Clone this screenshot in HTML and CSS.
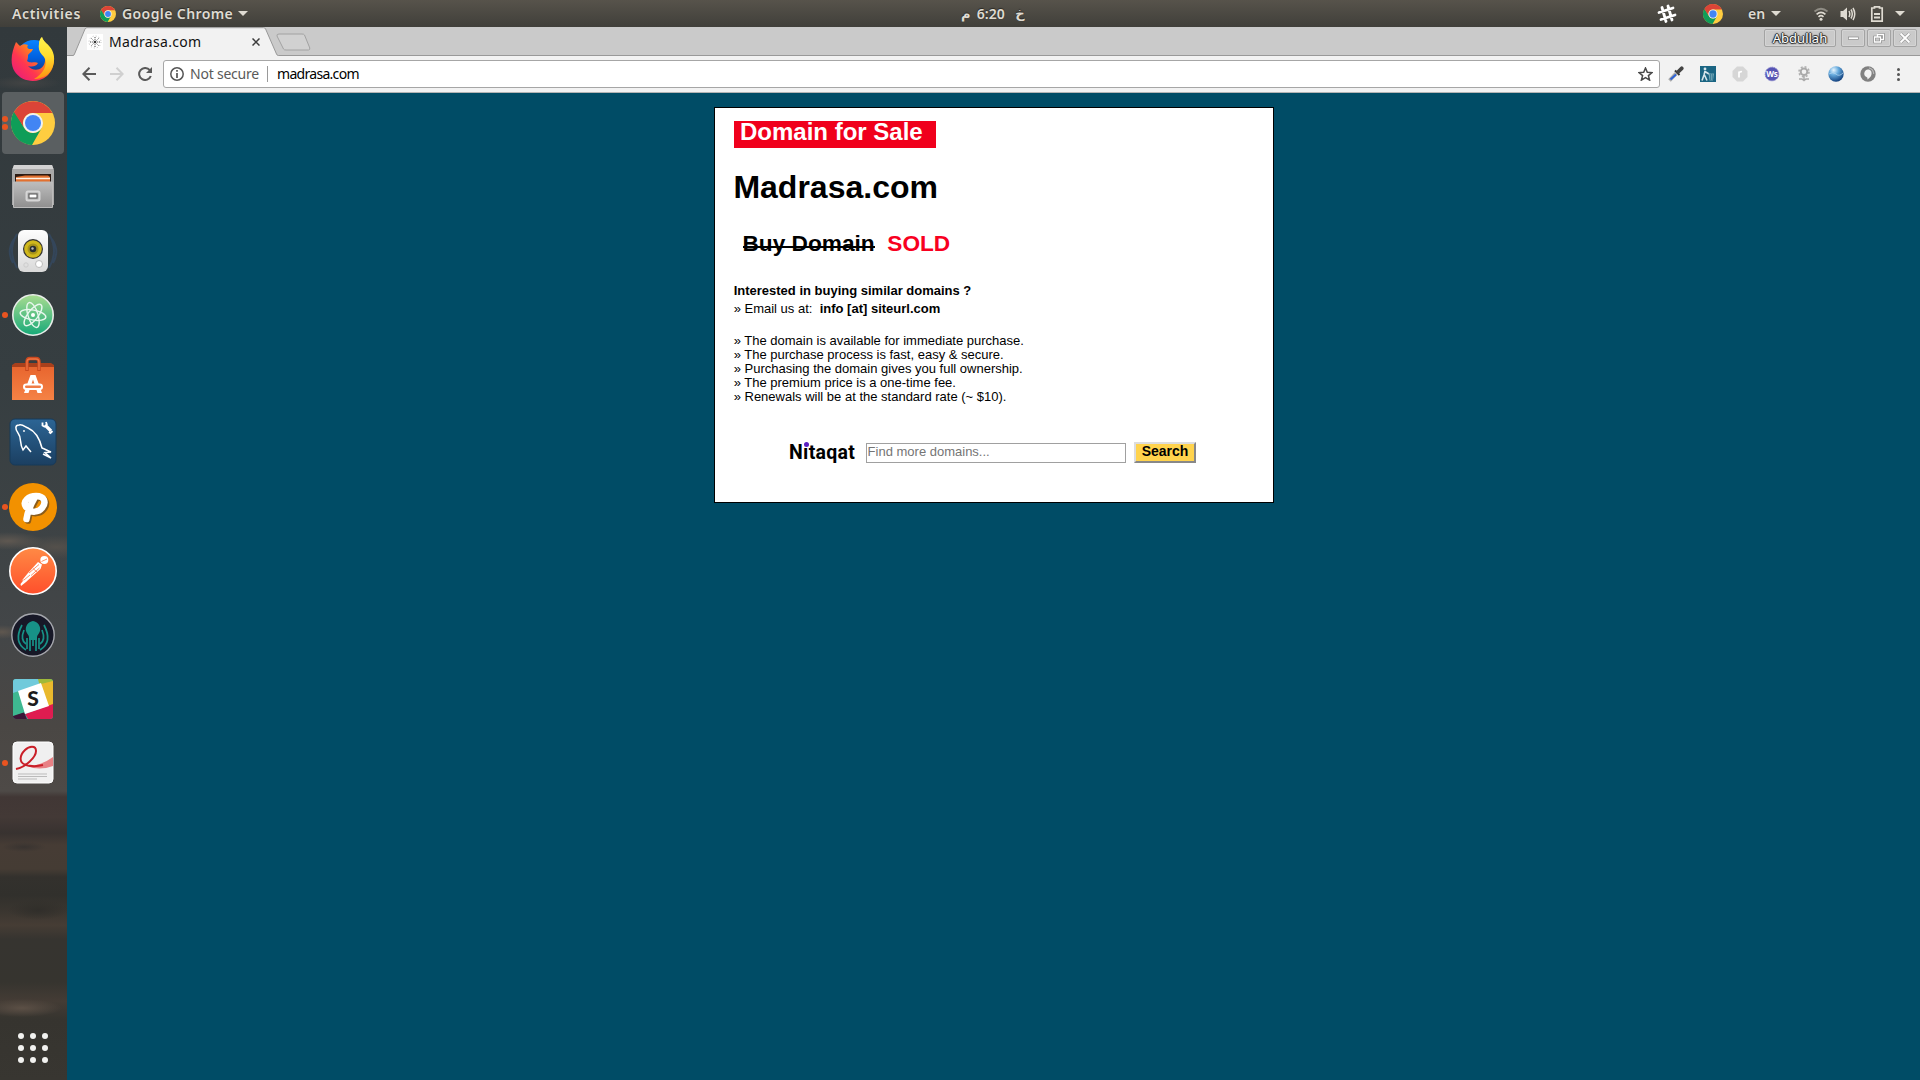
FILE: index.html
```html
<!DOCTYPE html>
<html lang="en">
<head>
<meta charset="utf-8">
<title>Madrasa.com</title>
<link rel="stylesheet" href="styles.css">
</head>
<body>
<svg class="defs" width="0" height="0">
  <defs>
    <linearGradient id="gFox" x1="0" y1="1" x2="1" y2="0"><stop offset="0" stop-color="#e31587"/><stop offset=".35" stop-color="#ff3750"/><stop offset=".65" stop-color="#ff980e"/><stop offset="1" stop-color="#fff44f"/></linearGradient>
    <linearGradient id="gFlame" x1="0" y1="0" x2="0" y2="1"><stop offset="0" stop-color="#fff44f"/><stop offset=".45" stop-color="#ffde2e"/><stop offset="1" stop-color="#ff9010"/></linearGradient>
    <linearGradient id="gBlue" x1="0" y1="0" x2="0" y2="1"><stop offset="0" stop-color="#0a84ff"/><stop offset=".5" stop-color="#0060df"/><stop offset="1" stop-color="#20306f"/></linearGradient>
    <linearGradient id="gMetal" x1="0" y1="0" x2="0" y2="1"><stop offset="0" stop-color="#bdbdbd"/><stop offset="1" stop-color="#8f8f8f"/></linearGradient>
    <linearGradient id="gWhite" x1="0" y1="0" x2="0" y2="1"><stop offset="0" stop-color="#fdfdfd"/><stop offset="1" stop-color="#d9d9d9"/></linearGradient>
    <linearGradient id="gAtom" x1="0" y1="0" x2="0" y2="1"><stop offset="0" stop-color="#a8dc90"/><stop offset="1" stop-color="#17a978"/></linearGradient>
    <linearGradient id="gBag" x1="0" y1="0" x2="0" y2="1"><stop offset="0" stop-color="#e8662f"/><stop offset="1" stop-color="#f58245"/></linearGradient>
    <linearGradient id="gSql" x1="0" y1="0" x2="0" y2="1"><stop offset="0" stop-color="#2c6595"/><stop offset="1" stop-color="#1b3f61"/></linearGradient>
    <linearGradient id="gPost" x1="0" y1="0" x2="0" y2="1"><stop offset="0" stop-color="#ff8a45"/><stop offset="1" stop-color="#ff4f2b"/></linearGradient>
    <radialGradient id="gGlobe" cx=".35" cy=".25" r=".8"><stop offset="0" stop-color="#e8f6ff"/><stop offset=".4" stop-color="#64a9dc"/><stop offset="1" stop-color="#0d3a78"/></radialGradient>
    <symbol id="chrome" viewBox="0 0 44 44">
      <circle cx="22" cy="22" r="22" fill="#ffcd40"/>
      <path d="M2.900 11A22 22 0 0 0 21 44L30.700 27A10 10 0 0 1 13.300 27L4 11Z" fill="#0f9d58"/>
      <path d="M2.900 11A22 22 0 0 1 41.400 12H22A10 10 0 0 0 13.300 27Z" fill="#db4437"/>
      <circle cx="22" cy="22" r="10" fill="#f1f1f1"/><circle cx="22" cy="22" r="8" fill="#4285f4"/>
    </symbol>
  </defs>
</svg>

<header class="topbar">
  <span class="activities">Activities</span>
  <svg class="app-icon" width="16" height="16"><use href="#chrome"/></svg>
  <span class="app-name">Google Chrome</span>
  <span class="caret"></span>
  <div class="clock"><span class="ar">م</span><span class="time">6:20</span><span class="ar day">خ</span></div>
  <div class="tray">
    <svg class="t-slack" width="20" height="20" viewBox="0 0 20 20"><path d="M5 3.500L9 17.500M11 2L15 16M2 8.500L16 4M4 15.500L18 11" stroke="#fff" stroke-width="2.800" stroke-linecap="round"/></svg>
    <svg class="t-chrome" width="20" height="20"><use href="#chrome"/></svg>
    <span class="t-lang">en</span>
    <span class="caret"></span>
    <svg class="t-wifi" width="16" height="16" viewBox="0 0 16 16" fill="none" stroke="#dfdbd2" stroke-width="1.700"><path d="M1.500 5.500Q8 0 14.500 5.500" stroke="#8f8c84"/><path d="M3.600 8.300Q8 4.500 12.400 8.300"/><path d="M5.500 10.800Q8 8.600 10.500 10.800"/><circle cx="8" cy="13.300" r="1.500" fill="#dfdbd2" stroke="none"/></svg>
    <svg class="t-vol" width="16" height="16" viewBox="0 0 16 16" fill="none" stroke="#dfdbd2" stroke-width="1.500"><path d="M.5 5H3L7 1.500V14.500L3 11H.5Z" fill="#dfdbd2" stroke="none"/><path d="M9 5Q10.600 8 9 11M11 3.500Q13.600 8 11 12.500M13 2Q16.500 8 13 14"/></svg>
    <svg class="t-bat" width="14" height="16" viewBox="0 0 14 16"><path d="M4.500 2V.8H9.500V2H12.200V15.200H1.800V2Z" fill="none" stroke="#dfdbd2" stroke-width="1.700"/><path d="M4 8H10M4 11.500H10" stroke="#dfdbd2" stroke-width="2"/></svg>
    <span class="caret last"></span>
  </div>
</header>

<main class="desktop">
<nav class="dock">
  <div class="item"><svg width="44" height="46" viewBox="0 0 44 46">
    <circle cx="23" cy="22" r="18" fill="url(#gBlue)"/>
    <path d="M5 6C7 8 8 9 9 10C12 8 14 8 17 9C16 11 16 12 18 13H22C21 16 18 17 17 19C17 21 17 23 16 25C20 28 24 25 27 27C25 31 20 31 17 30C22 36 33 35 34 25C35 19 28 16 28 9C28 5 29 3 31 1C32 5 36 8 39 12C46 22 43 34 36 40C26 48 11 46 4 36C-2 27 1 15 5 6Z" fill="url(#gFox)"/>
    <path d="M31 1C32 6 38 8 41 14C45 22 43 31 38 37C34 41 28 43 23 43C34 37 37 27 33 21C29 17 27 14 28 8C28 5 29 3 31 1Z" fill="url(#gFlame)"/>
  </svg></div>
  <div class="item active two"><svg width="44" height="44"><use href="#chrome"/></svg></div>
  <div class="item"><svg class="raise" width="44" height="46" viewBox="0 0 44 46">
    <path d="M3 2H41L43 7V42H1V7Z" fill="#a9a9a9"/><path d="M3 2H41L42.500 6H1.500Z" fill="#d2d2d2"/><path d="M4 11H40V20H4Z" fill="#2b1a12"/><path d="M5 14L14 12.500H37L39 14V19H5Z" fill="#e2702f"/><path d="M5 15.500H39" stroke="#fff3e5" stroke-width="1.500"/><path d="M2.500 19H41.500V44.500H2.500Z" fill="url(#gMetal)" stroke="#bbb"/><rect x="15.500" y="28.500" width="13" height="9" rx="1.500" fill="#aaa" stroke="#d6d6d6" stroke-width="2"/><rect x="18" y="31" width="8" height="4" fill="#fff" stroke="#555"/>
  </svg></div>
  <div class="item"><svg width="50" height="46" viewBox="0 0 50 46" fill="none">
    <path d="M9 6Q-1 23 9 40M41 6Q51 23 41 40M6 11Q-2 23 5 35M44 11Q52 23 45 35" stroke="#34465a" stroke-width="2"/>
    <rect x="10" y="2" width="30" height="42" rx="6" fill="url(#gWhite)"/><circle cx="25" cy="21" r="10" fill="#333"/><circle cx="25" cy="21" r="8.800" fill="#d0b81c"/><circle cx="25" cy="21" r="5.500" fill="#a8941a"/><circle cx="25" cy="21" r="3.300" fill="#282d30"/><circle cx="24.500" cy="20.500" r="1.200" fill="#bbb"/><circle cx="31" cy="36" r="3.500" fill="#fff" stroke="#bbb"/><circle cx="18" cy="37" r="2.200" stroke="#ccc"/>
  </svg></div>
  <div class="item one"><svg width="42" height="42" viewBox="0 0 42 42" fill="none">
    <circle cx="21" cy="21" r="20.200" fill="url(#gAtom)" stroke="#e8ece9" stroke-width="1.600"/><g stroke="#e9f7ee" stroke-width="1.400"><ellipse cx="21" cy="21" rx="13" ry="5" transform="rotate(10 21 21)"/><ellipse cx="21" cy="21" rx="13" ry="5" transform="rotate(72 21 21)"/><ellipse cx="21" cy="21" rx="13" ry="5" transform="rotate(128 21 21)"/></g><circle cx="21" cy="21" r="2" fill="#fff"/>
  </svg></div>
  <div class="item"><svg class="raise" width="42" height="46" viewBox="0 0 42 46" fill="none">
    <path d="M0 10L3 8H39L42 10V13H0Z" fill="#a8401c"/><path d="M0 12H42V45H0Z" fill="url(#gBag)"/><path d="M15 16V7Q15 3.500 18 3.500H24Q27 3.500 27 7V16" stroke="#c9481e" stroke-width="3.500"/><path d="M15 15V7Q15 4 18 4H24Q27 4 27 7V15" stroke="#ee7444" stroke-width="1.300"/>
    <path d="M18.500 20H23.500L30 38H25.500L21 24.500L16.500 38H12Z" fill="#fff"/><rect x="12" y="29.500" width="18" height="4.600" rx="2.300" fill="#f07c46" stroke="#fff" stroke-width="2"/>
  </svg></div>
  <div class="item"><svg class="raise" width="48" height="48" viewBox="0 0 48 48" fill="none">
    <rect x="1" y="1" width="46" height="46" rx="5" fill="url(#gSql)" stroke="#173a59"/>
    <path d="M22 34L17 28L14 32C10 25 13 20 9 15C6 11 6 7 10 7C14 6 16 9 19 10C28 14 31 22 33 30C36 31 39 33 42 34L36 34.500L42 40L34 36" stroke="#fff" stroke-width="1.500"/><circle cx="15" cy="13" r=".9" fill="#fff"/>
    <path d="M36 7L42 13" stroke="#fff" stroke-width="3.200"/><path d="M33.500 4.500V7.500L36 9M40 14L41.500 15L43.500 13" stroke="#fff" stroke-width="1.800"/><path d="M37 4L38 7" stroke="#fff" stroke-width="1.800"/>
  </svg></div>
  <div class="item one"><svg width="48" height="48" viewBox="0 0 48 48" fill="none">
    <circle cx="24" cy="24" r="24" fill="#f29100"/><path d="M17 24C13 18 20 13 27 13C35 13 38 19 33 25C29 30 22 29 21 27M25 16C21 23 18 32 17.500 36" transform="translate(1.500 1.500)" stroke="#8a5c1a" stroke-width="6.500" stroke-linecap="round"/><path d="M17 24C13 18 20 13 27 13C35 13 38 19 33 25C29 30 22 29 21 27M25 16C21 23 18 32 17.500 36" stroke="#fff" stroke-width="6.500" stroke-linecap="round" stroke-linejoin="round"/>
  </svg></div>
  <div class="item"><svg width="48" height="48" viewBox="0 0 48 48">
    <circle cx="24" cy="24" r="23.200" fill="url(#gPost)" stroke="#fff" stroke-width="1.600"/><circle cx="35.300" cy="13" r="4" fill="#fff"/><path d="M29 15L33 17.500L31.500 22L23 29.500L17 35L12 39L11.500 37L15.500 32L12.500 34L19 26Z" fill="#fff"/><path d="M32.500 14.500L38 12M20 26L30 17.500M22 28.500L30.500 21M24 21.500L28 25M15 33L21 28" stroke="#ff7443" stroke-width=".8" fill="none"/>
  </svg></div>
  <div class="item"><svg width="44" height="44" viewBox="0 0 44 44" fill="none">
    <circle cx="22" cy="22" r="21.200" fill="#171827" stroke="#a5a7ad" stroke-width="1.400"/><path d="M22 8C27 9 30 13 29 18C28 21 26 22 26 24V27H18V24C18 22 16 21 15 18C14 13 17 9 22 8Z" fill="#179287"/><g stroke="#179287" stroke-width="1.700"><path d="M19 26V38M25 26V38M22 26V33M16 25V36M28 25V36"/><path d="M11 12Q2 29 15 37M33 12Q42 29 29 37M13 17Q9 27 15 31M31 17Q35 27 29 31"/></g>
  </svg></div>
  <div class="item"><svg width="40" height="40" viewBox="0 0 40 40">
    <rect width="40" height="40" rx="3" fill="#3bb9a0"/><path d="M3 0H28L32 10L5 16L0 14V3Q0 0 3 0Z" fill="#70cadb"/><path d="M25 0H37Q40 0 40 3V8L28 12Z" fill="#9fb93a"/><path d="M28 5L40 2V27L33 29Z" fill="#e9b92d"/><path d="M40 25V37Q40 40 37 40H15L12 35Z" fill="#df1c50"/><path d="M0 36L11 33L14 40H3Q0 40 0 37Z" fill="#3c1637"/><path d="M0 14L6 12L12 33L0 37Z" fill="#3eb890"/><path d="M5 12L28 4L36 27L12 35Z" fill="#fff"/>
    <text x="20" y="27" text-anchor="middle" class="slack-s">S</text>
  </svg></div>
  <div class="item one"><svg width="42" height="44" viewBox="0 0 42 44" fill="none">
    <rect x="1" y="1" width="40" height="41" rx="4" fill="#f0f0f0" stroke="#fff"/><path d="M15 25Q29 25 41 16V25Q27 30 15 25Z" fill="#e88084"/><path d="M4 28C14 26 24 16 24 10C24 4 17 5 13 9C7 15 7 22 14 24C21 26 27 25 31 24" stroke="#c91f28" stroke-width="2"/><path d="M6 33H35M6 35.500H35M6 38H25" stroke="#bbb" stroke-width="1"/>
  </svg></div>
  <div class="apps"><i></i><i></i><i></i><i></i><i></i><i></i><i></i><i></i><i></i></div>
</nav>

<section class="window">
  <div class="tabstrip">
    <div class="tab">
      <svg class="tab-shape" width="206" height="29" viewBox="0 0 206 29"><path d="M0 29V28.500Q1 28.500 1.500 27L12 2Q12.700 .7 14 .7H190.500Q192 .7 192.600 2L203.500 27Q204 28.500 205.500 28.500V29Z" fill="#f2f2f2"/><path d="M0 28.500Q1 28.500 1.500 27L12 2Q12.700 .7 14 .7H190.500Q192 .7 192.600 2L203.500 27Q204 28.500 205.500 28.500" fill="none" stroke="#999"/></svg>
      <svg class="favicon" width="16" height="16" viewBox="0 0 16 16"><rect width="16" height="16" fill="#fff"/><g fill="none"><circle cx="8" cy="8" r="1" fill="#000"/><path d="M8 3V13M3 8H13M4.500 4.500L11.500 11.500M11.500 4.500L4.500 11.500" stroke="#333" stroke-dasharray="1 .8" stroke-width=".9"/><circle cx="8" cy="8" r="6" stroke="#bbb" stroke-dasharray="1 2.140"/></g></svg>
      <span class="tab-title">Madrasa.com</span>
      <svg class="tab-close" width="8" height="8" viewBox="0 0 8 8"><path d="M.5 .5L7.500 7.500M7.500 .5L.5 7.500" stroke="#3c3c3c" stroke-width="1.500"/></svg>
    </div>
    <svg class="newtab" width="35" height="18" viewBox="0 0 35 18"><path d="M3 1H26Q28 1 28.500 2L33.800 15Q34 17 32.500 17H10Q8 17 7.500 16L1 3Q.5 1 3 1Z" fill="#d1d1d1" stroke="#a2a2a2"/></svg>
    <div class="wm"><span class="user">Abdullah</span>
      <span class="wbtn"><svg width="14" height="14" viewBox="0 0 14 14"><rect x="2.500" y="6" width="10" height="2.500" fill="#fff" stroke="#8a8a8a" stroke-width=".7"/></svg></span>
      <span class="wbtn"><svg width="14" height="14" viewBox="0 0 14 14" fill="none"><path d="M5.500 3.500H11.500V8.500H9.500M2.500 6H8.500V11H2.500Z" stroke="#888" stroke-width="2.600"/><path d="M5.500 6V3.500H11.500V8.500H8.500M2.500 6H8.500V11H2.500Z" stroke="#fff" stroke-width="1.300"/></svg></span>
      <span class="wbtn"><svg width="14" height="14" viewBox="0 0 14 14"><path d="M2.500 2.500L11.500 11.500M11.500 2.500L2.500 11.500" stroke="#888" stroke-width="3"/><path d="M2.500 2.500L11.500 11.500M11.500 2.500L2.500 11.500" stroke="#fff" stroke-width="1.900"/></svg></span>
    </div>
  </div>
  <div class="toolbar">
    <svg class="back" width="14" height="14" viewBox="0 0 14 14" fill="none" stroke="#5a5a5a" stroke-width="2"><path d="M14 7H1.500M7.500 .8L1.300 7L7.500 13.200"/></svg>
    <svg class="fwd" width="14" height="14" viewBox="0 0 14 14" fill="none" stroke="#d0d0d0" stroke-width="2"><path d="M0 7H12.500M6.500 .8L12.700 7L6.500 13.200"/></svg>
    <svg class="reload" width="14" height="14" viewBox="0 0 14 14"><path d="M11.800 3.200A6 6 0 1 0 12.800 9" fill="none" stroke="#5a5a5a" stroke-width="2"/><path d="M14 0V6H8Z" fill="#5a5a5a"/></svg>
    <div class="omnibox">
      <svg width="14" height="14" viewBox="0 0 14 14"><circle cx="7" cy="7" r="6.200" fill="none" stroke="#555" stroke-width="1.500"/><path d="M7 6V11M7 3V4.700" stroke="#555" stroke-width="1.700"/></svg>
      <span class="insecure">Not secure</span><span class="sep"></span><span class="url">madrasa.com</span>
      <svg class="star" width="15" height="14" viewBox="0 0 15 14"><path d="M7.500 1L9.300 5.300L14 5.600L10.400 8.600L11.600 13.100L7.500 10.600L3.400 13.100L4.600 8.600L1 5.600L5.700 5.300Z" fill="none" stroke="#4a4a4a" stroke-width="1.500"/></svg>
    </div>
    <div class="ext">
      <svg width="16" height="16" viewBox="0 0 16 16"><path d="M1.500 14.500L8 7.500" stroke="#aaa" stroke-width="3.500"/><path d="M2.500 13.500L8 8.500" stroke="#2d62d5" stroke-width="2"/><path d="M7 4.500L11.500 9" stroke="#333" stroke-width="2"/><path d="M10 6L13.700 2.300" stroke="#444" stroke-width="3.800" stroke-linecap="round"/></svg>
      <svg width="16" height="16" viewBox="0 0 16 16"><rect width="16" height="16" fill="#1b6583"/><circle cx="5" cy="3" r="1.400" fill="#d5e5eb"/><path d="M5 5L4 9L2 14.500M4.500 9L7 14.500M5 5.500L9 8" stroke="#d5e5eb" stroke-width="1.600" fill="none"/><path d="M8.500 7.500H14L13 14.500H9.500Z" fill="#77a9b9"/><path d="M10.500 8V14M12.300 8V14" stroke="#1b6583" stroke-width=".6"/></svg>
      <svg width="16" height="16" viewBox="0 0 16 16"><path d="M5 .5H11L15.500 5V11L11 15.500H5L.5 11V5Z" fill="#d6d6d6"/><path d="M7 11.500V5.500M7 7Q8 5.300 10 5.800" stroke="#fff" stroke-width="1.700" fill="none"/></svg>
      <svg width="16" height="16" viewBox="0 0 16 16"><circle cx="8" cy="8" r="6.800" fill="#5654b4" stroke="#7876c4" stroke-dasharray="1.200 .8"/><text x="8" y="10.500" text-anchor="middle" class="ws">Ws</text></svg>
      <svg width="16" height="16" viewBox="0 0 16 16" fill="none"><circle cx="8" cy="5.800" r="3.300" stroke="#aaa" stroke-width="2"/><circle cx="8" cy="5.800" r="5" stroke="#b0b0b0" stroke-width="1.600" stroke-dasharray="2 1.920"/><path d="M8 10V14M3 13H6L8 14.500L10 13H13" stroke="#aaa" stroke-width="1.500"/></svg>
      <svg width="16" height="16" viewBox="0 0 16 16"><circle cx="8" cy="8" r="7.700" fill="url(#gGlobe)"/><path d="M1 8Q5 5 8 8T15 7" stroke="#b9dcf4" fill="none" opacity=".7"/></svg>
      <svg width="16" height="16" viewBox="0 0 16 16" fill="none"><circle cx="8" cy="8" r="7.700" fill="#808080"/><path d="M8 3.500C11 3.500 12 6 11.500 8.500C11 11 9 12.500 7 13.500C8 12 7.500 11.500 6.500 11C4.500 10 4 8.500 4.300 7C4.800 4.800 6 3.500 8 3.500Z" fill="#f2f2f2"/><path d="M9 1.800Q13.500 3 13.700 8" stroke="#b5b5b5" stroke-width="1.200"/></svg>
    </div>
    <div class="menu"><i></i><i></i><i></i></div>
  </div>
  <div class="page">
    <div class="card">
      <div class="sale">Domain for Sale</div>
      <h1>Madrasa.com</h1>
      <div class="buy"><s>Buy Domain</s><span class="sold">SOLD</span></div>
      <p class="lead">Interested in buying similar domains ?</p>
      <p class="mail">» Email us at: &nbsp;<b>info [at] siteurl.com</b></p>
      <p class="list">» The domain is available for immediate purchase.<br>» The purchase process is fast, easy &amp; secure.<br>» Purchasing the domain gives you full ownership.<br>» The premium price is a one-time fee.<br>» Renewals will be at the standard rate (~ $10).</p>
      <form class="search"><span class="brand">N<span class="dot-i">ı</span>taqat</span><input type="text" placeholder="Find more domains..."><button type="button">Search</button></form>
    </div>
  </div>
</section>
</main>
</body>
</html>
```
FILE: styles.css
```css
* { box-sizing: border-box; }
body { margin: 0; width: 1920px; height: 1080px; overflow: hidden; font-family: "Noto Sans", sans-serif; background: #004c66; }
svg { display: block; flex: none; }
.defs { position: absolute; }
span { white-space: nowrap; }

.topbar { height: 27px; background: linear-gradient(#57534b, #403f3a); color: #dfdbd2; display: flex; align-items: center; font-weight: 600; font-size: 14px; text-shadow: 0 -1px 1px #2a2926; }
.activities { width: 88px; padding-left: 12px; letter-spacing: .65px; }
.app-icon { margin-left: 12px; }
.app-name { width: 110px; margin-left: 6px; letter-spacing: .4px; }
.caret { width: 10px; height: 5px; margin-left: 6px; background: #dfdbd2; clip-path: polygon(0 0, 100% 0, 50% 100%); }
.clock { margin-left: 713px; width: 70px; display: flex; align-items: center; }
.ar { font-family: "DejaVu Sans", sans-serif; font-weight: 700; font-size: 13px; width: 16px; }
.time { width: 39px; padding-bottom: 1px; }
.tray { margin-left: auto; width: 263px; display: flex; align-items: center; }
.t-chrome { margin-left: 26px; }
.t-lang { width: 18px; margin-left: 25px; }
.tray .caret { margin-left: 5px; }
.t-wifi { margin-left: 32px; }
.t-vol { margin-left: 11px; }
.t-bat { margin-left: 14px; }
.tray .caret.last { margin-left: 11px; }

.desktop { display: flex; height: 1053px; }
.dock { width: 67px; padding: 1px 3px 0 2px; display: flex; flex-direction: column; gap: 2px; background:
  radial-gradient(ellipse 36px 9px at 8px 514px, #5f5851, transparent),
  radial-gradient(ellipse 40px 12px at 56px 520px, #54504b, transparent),
  radial-gradient(ellipse 20px 7px at 2px 605px, #5f574f, transparent),
  radial-gradient(ellipse 36px 7px at 25px 56px, #434444, transparent),
  radial-gradient(ellipse 22px 5px at 24px 820px, #383330, transparent),
  radial-gradient(ellipse 30px 10px at 38px 883px, #302e2a, transparent),
  radial-gradient(ellipse 40px 9px at 22px 981px, #5c5046, transparent),
  linear-gradient(#32393c 0, #363e41 350px, #3c4244 480px, #434648 600px, #4a4744 700px, #4e4a47 764px, #413735 770px, #433936 790px, #383230 806px, #463c35 818px, #453c34 842px, #33312d 850px, #31302c 868px, #3b3630 885px, #463d35 898px, #363430 912px, #36342f 955px, #443c35 974px, #36342f 992px, #383631 1053px); }
.item { height: 62px; width: 62px; border-radius: 4px; display: flex; align-items: center; justify-content: center; position: relative; flex: none; }
.item.active { background: #5a5f61; }
.raise { margin-bottom: 2px; }
.one::before, .two::before { content: ""; position: absolute; left: 0; top: 28px; width: 6px; height: 6px; border-radius: 50%; background: #e95420; }
.two::before { top: 24px; box-shadow: 0 8px #e95420; }
.slack-s { font: 900 21px Lato, sans-serif; fill: #1d1c1d; }
.apps { margin: auto 0 17px 16px; display: grid; grid-template-columns: repeat(3, 6px); gap: 6px; }
.apps i { width: 6px; height: 6px; border-radius: 50%; background: #f2f2f0; }

.window { flex: 1; display: flex; flex-direction: column; }
.tabstrip { height: 29px; background: #cacaca; border-bottom: 1px solid #999; display: flex; flex: none; }
.tab { width: 206px; height: 29px; margin-left: 6px; position: relative; display: flex; align-items: center; }
.tab-shape { position: absolute; left: 0; top: 0; }
.favicon { margin-left: 14px; position: relative; }
.tab-title { width: 143px; margin-left: 6px; font-size: 14px; letter-spacing: .3px; position: relative; color: #111; }
.tab-close { position: relative; }
.newtab { margin: 6px 0 0 -3px; }
.wm { margin: 2px 3px 0 auto; height: 18px; display: flex; gap: 2px; }
.user, .wbtn { border: 1px solid #a3a3a3; border-radius: 2px; box-shadow: inset 0 0 0 1px #d4d4d4; }
.user { width: 72px; margin-right: 3px; text-align: center; font-size: 13px; line-height: 16px; color: #fff; text-shadow: 1px 0 1px #222, -1px 0 1px #222, 0 1px 1px #222, 0 -1px 1px #222; }
.wbtn { width: 24px; display: flex; align-items: center; justify-content: center; }
.toolbar { height: 37px; background: #f2f2f2; border-bottom: 1px solid #b4b4b4; display: flex; align-items: center; padding-left: 15px; flex: none; }
.fwd, .reload { margin-left: 14px; }
.omnibox { width: 1497px; height: 28px; margin-left: 11px; background: #fff; border: 1px solid #a6a6a6; border-radius: 3px; display: flex; align-items: center; padding: 0 6px; font-size: 14px; color: #000; }
.insecure { width: 77px; margin-left: 6px; padding-bottom: 1px; letter-spacing: -.22px; color: #5a5a5a; }
.sep { width: 1px; height: 16px; background: #9a9a9a; }
.url { margin-left: 9px; padding-bottom: 1px; letter-spacing: -.7px; }
.star { margin-left: auto; }
.ext { display: flex; gap: 16px; margin-left: 8px; }
.menu { margin-left: 21px; display: grid; gap: 2px; }
.menu i { width: 3px; height: 3px; border-radius: 50%; background: #555; }

.page { flex: 1; background: #004c66; padding: 14px 0 0 647px; font-family: "Liberation Sans", Arial, sans-serif; color: #000; }
.card { width: 560px; height: 396px; background: #fff; border: 1px solid #000; padding: 13px 19px; font-size: 13px; }
.sale { width: 202px; height: 27px; background: #f0001c; color: #fff; font: bold 24px/22px "Liberation Sans", sans-serif; padding-left: 6px; }
h1 { margin: 21px 0 0 -.6px; font-size: 32px; line-height: 36px; }
.buy { margin: 25px 0 0 8.5px; display: flex; font-weight: bold; font-size: 22.67px; line-height: 26px; }
.buy s { text-decoration: none; position: relative; }
.buy s::after { content: ""; position: absolute; left: 0; right: 0; top: 16px; height: 2px; background: #000; }
.sold { margin-left: 12.6px; color: #f8001f; }
p { margin: 0 0 0 -.35px; }
.lead { margin-top: 26px; font-weight: bold; line-height: 18px; }
.mail { line-height: 18px; }
.list { margin-top: 16px; line-height: 14px; }
.search { margin: 38px 0 0 55px; height: 22px; display: flex; align-items: center; }
.brand { width: 77px; font: bold 19.5px/24px Roboto, sans-serif; letter-spacing: .3px; }
.dot-i { position: relative; }
.dot-i::after { content: ""; position: absolute; left: .5px; top: 1px; width: 5px; height: 5px; border-radius: 50%; background: #5a1fc0; }
.search input { width: 260px; height: 20px; border: 1px solid #a0a0a0; padding: 0 1px 3px .6px; font: 13px "Liberation Sans", sans-serif; }
.search input::placeholder { color: #757575; }
.search button { width: 62px; height: 21px; margin-left: 8px; margin-bottom: 1px; background: #ffd34d; border: 2px solid; border-color: #ddd #888 #888 #ddd; padding: 0 0 2px; font: bold 14px/15px "Liberation Sans", sans-serif; color: #000; }
.ws { font: bold 8px "Noto Sans", sans-serif; fill: #fff; }
```
